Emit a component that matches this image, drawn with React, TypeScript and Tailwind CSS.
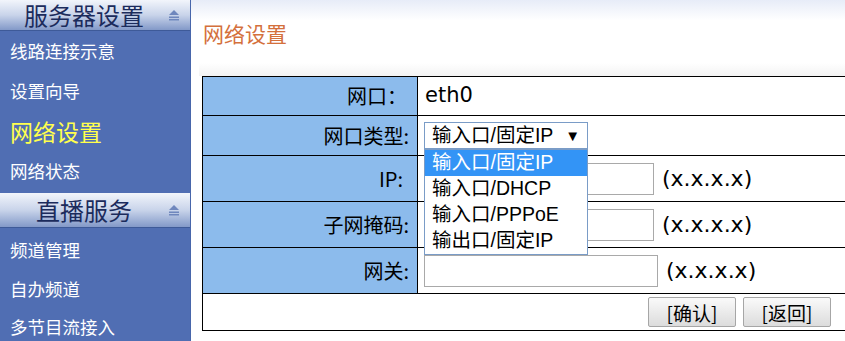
import React from "react"

const cjk = { fontFamily: '"Noto Sans CJK SC", "Noto Sans", sans-serif' }
const latin = { fontFamily: '"DejaVu Sans", "Noto Sans CJK SC", sans-serif' }
const arial = { fontFamily: '"Liberation Sans", "Noto Sans CJK SC", sans-serif' }

const HeaderArrow = () => (
  <svg width="12" height="12" viewBox="0 0 12 12" className="shrink-0">
    <polygon points="6,1 11,6 1,6" fill="#6f87bd" />
    <rect x="1" y="7.5" width="10" height="1.5" fill="#6f87bd" />
    <rect x="1" y="10" width="10" height="1.5" fill="#6f87bd" />
  </svg>
)

const SideHeader = ({ title, h }: { title: string; h: string }) => (
  <div
    className={`flex items-center ${h} border-b border-[#3e5a98] bg-gradient-to-b from-[#f2f5fb] via-[#c9d4ea] to-[#8399c8] pr-[10px]`}
  >
    <div className="flex-1 text-center text-[24px] leading-[30px] text-[#1b2b5c]">
      {title}
    </div>
    <HeaderArrow />
  </div>
)

const SideItem = ({ label, active, h = "h-[40px]" }: { label: string; active?: boolean; h?: string }) => (
  <div
    className={`flex items-center ${h} pl-[10px] ${
      active ? "text-[23px] text-[#ffff4d]" : "text-[17.5px] text-white"
    }`}
  >
    {label}
  </div>
)

const IpInput = ({ width }: { width: string }) => (
  <div className="flex items-center gap-[8px]">
    <div className={`h-[32px] ${width} border border-[#a9a9a9] bg-white`} />
    <span className="text-[22px] text-black" style={latin}>
      (x.x.x.x)
    </span>
  </div>
)

const options = ["输入口/固定IP", "输入口/DHCP", "输入口/PPPoE", "输出口/固定IP"]

export default function App() {
  return (
    <div className="flex w-[845px] h-[341px] overflow-hidden bg-white" style={cjk}>
      <div className="w-[191px] shrink-0 bg-[#506eb3] border-r border-[#4766ab]">
        <SideHeader title="服务器设置" h="h-[31px]" />
        <SideItem label="线路连接示意" />
        <SideItem label="设置向导" />
        <SideItem label="网络设置" active />
        <SideItem label="网络状态" />
        <div className="h-[2px]" />
        <SideHeader title="直播服务" h="h-[35px]" />
        <div className="h-[2px]" />
        <SideItem label="频道管理" />
        <SideItem label="自办频道" h="h-[39px]" />
        <SideItem label="多节目流接入" h="h-[36px]" />
      </div>

      <div className="flex-1 flex flex-col bg-gradient-to-b from-[#e7ecf8] via-white via-[6%] to-white">
        <div className="h-[63px] flex items-center pl-[12px] pt-[4px] text-[21px] text-[#d4703c]">
          网络设置
        </div>
        <div className="h-[13px] ml-[8px] bg-gradient-to-b from-white to-[#f3f3f3]" />
        <div className="pl-[11px]">
          <table className="w-[660px] border-collapse border border-black text-black">
            <tbody>
              <tr className="h-[39px]">
                <td className="w-[215px] bg-[#8cbbec] border border-black text-right pr-[10px] text-[20px]">
                  网口：
                </td>
                <td className="border border-black pl-[7px] text-[21px]" style={latin}>
                  eth0
                </td>
              </tr>
              <tr className="h-[40px]">
                <td className="bg-[#8cbbec] border border-black text-right pr-[8px] text-[20px]">
                  网口类型:
                </td>
                <td className="border border-black pl-[6px]">
                  <div className="relative w-[164px]" style={arial}>
                    <div className="flex items-center justify-between h-[27px] border border-[#7a9cc7] bg-white pl-[7px] pr-[7px] text-[19.5px] leading-none">
                      <span>输入口/固定IP</span>
                      <span className="text-[15px]">▼</span>
                    </div>
                    <div className="absolute left-0 top-[27px] w-[164px] z-10 border border-[#7a9cc7] bg-white">
                      {options.map((o, i) => (
                        <div
                          key={o}
                          className={`h-[26px] flex items-center pl-[7px] text-[19.5px] leading-none ${
                            i === 0 ? "bg-[#3394f6] text-white" : "text-black"
                          }`}
                        >
                          {o}
                        </div>
                      ))}
                    </div>
                  </div>
                </td>
              </tr>
              <tr className="h-[46px]">
                <td className="bg-[#8cbbec] border border-black text-right pr-[14px] text-[20px]">
                  IP:
                </td>
                <td className="border border-black pl-[6px]">
                  <IpInput width="w-[230px]" />
                </td>
              </tr>
              <tr className="h-[46px]">
                <td className="bg-[#8cbbec] border border-black text-right pr-[8px] text-[20px]">
                  子网掩码:
                </td>
                <td className="border border-black pl-[6px]">
                  <IpInput width="w-[230px]" />
                </td>
              </tr>
              <tr className="h-[46px]">
                <td className="bg-[#8cbbec] border border-black text-right pr-[8px] text-[20px]">
                  网关:
                </td>
                <td className="border border-black pl-[6px]">
                  <IpInput width="w-[234px]" />
                </td>
              </tr>
              <tr className="h-[37px]">
                <td colSpan={2} className="border border-black">
                  <div className="flex gap-[7px] pl-[445px]">
                    <button className="h-[30px] w-[88px] rounded-[2px] border border-[#a6a6a6] bg-gradient-to-b from-[#fafafa] to-[#dcdcdc] text-[19px] leading-none">
                      [确认]
                    </button>
                    <button className="h-[30px] w-[88px] rounded-[2px] border border-[#a6a6a6] bg-gradient-to-b from-[#fafafa] to-[#dcdcdc] text-[19px] leading-none">
                      [返回]
                    </button>
                  </div>
                </td>
              </tr>
            </tbody>
          </table>
        </div>
      </div>
    </div>
  )
}
